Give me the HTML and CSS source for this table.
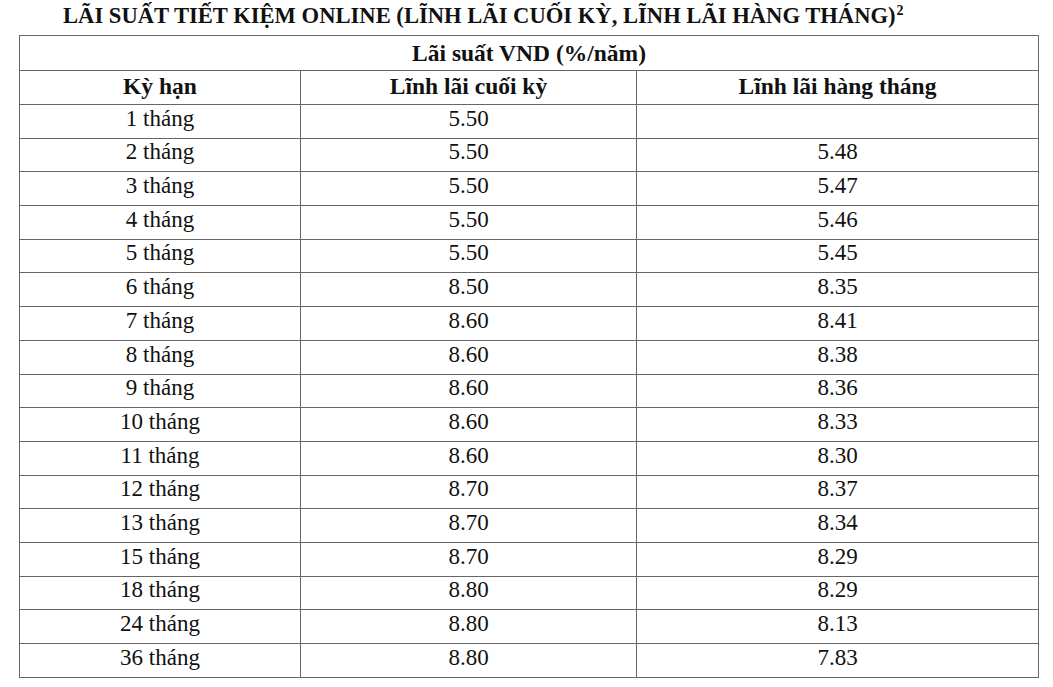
FILE: index.html
```html
<!DOCTYPE html>
<html lang="vi">
<head>
<meta charset="utf-8">
<title>Lãi suất tiết kiệm online</title>
<link rel="stylesheet" href="styles.css">
</head>
<body>
<h1 class="title">LÃI SUẤT TIẾT KIỆM ONLINE (LĨNH LÃI CUỐI KỲ, LĨNH LÃI HÀNG THÁNG)<sup>2</sup></h1>
<table class="rates">
  <colgroup>
    <col class="c1"><col class="c2"><col class="c3">
  </colgroup>
  <thead>
    <tr class="h1"><th colspan="3">Lãi suất VND (%/năm)</th></tr>
    <tr class="h2"><th>Kỳ hạn</th><th>Lĩnh lãi cuối kỳ</th><th>Lĩnh lãi hàng tháng</th></tr>
  </thead>
  <tbody>
    <tr><td>1 tháng</td><td>5.50</td><td></td></tr>
    <tr><td>2 tháng</td><td>5.50</td><td>5.48</td></tr>
    <tr><td>3 tháng</td><td>5.50</td><td>5.47</td></tr>
    <tr><td>4 tháng</td><td>5.50</td><td>5.46</td></tr>
    <tr><td>5 tháng</td><td>5.50</td><td>5.45</td></tr>
    <tr><td>6 tháng</td><td>8.50</td><td>8.35</td></tr>
    <tr><td>7 tháng</td><td>8.60</td><td>8.41</td></tr>
    <tr><td>8 tháng</td><td>8.60</td><td>8.38</td></tr>
    <tr><td>9 tháng</td><td>8.60</td><td>8.36</td></tr>
    <tr><td>10 tháng</td><td>8.60</td><td>8.33</td></tr>
    <tr><td>11 tháng</td><td>8.60</td><td>8.30</td></tr>
    <tr><td>12 tháng</td><td>8.70</td><td>8.37</td></tr>
    <tr><td>13 tháng</td><td>8.70</td><td>8.34</td></tr>
    <tr><td>15 tháng</td><td>8.70</td><td>8.29</td></tr>
    <tr><td>18 tháng</td><td>8.80</td><td>8.29</td></tr>
    <tr><td>24 tháng</td><td>8.80</td><td>8.13</td></tr>
    <tr><td>36 tháng</td><td>8.80</td><td>7.83</td></tr>
  </tbody>
</table>
</body>
</html>
```
FILE: styles.css
```css
html, body {
  margin: 0;
  padding: 0;
  background: #ffffff;
}
body {
  font-family: "Liberation Serif", "Times New Roman", serif;
  color: #111111;
}
.title {
  margin: 3px 0 6px 63px;
  font-size: 22.6px;
  line-height: 26px;
  font-weight: bold;
  white-space: nowrap;
}
.title sup {
  font-size: 14px;
  font-weight: bold;
  line-height: 0;
  vertical-align: 8px;
  margin-left: 1px;
}
.rates {
  margin-left: 19px;
  width: 1019px;
  border-collapse: collapse;
  table-layout: fixed;
  border: 1px solid #555555;
}
.c1 { width: 281px; }
.c2 { width: 336px; }
.c3 { width: 402px; }
.rates th,
.rates td {
  border: 1px solid #666666;
  padding: 0 4px 6px;
  text-align: center;
  vertical-align: bottom;
  line-height: 26px;
  white-space: nowrap;
}
.rates th {
  font-size: 23.5px;
  font-weight: bold;
}
.rates td {
  font-size: 23px;
}
.rates tr.h1 { height: 35px; }
.rates tr.h1 th { padding-bottom: 4px; }
.rates tr.h2 { height: 34px; }
.rates tr.h2 th { padding-bottom: 5px; }
.rates tbody tr { height: 33.7px; }
```
